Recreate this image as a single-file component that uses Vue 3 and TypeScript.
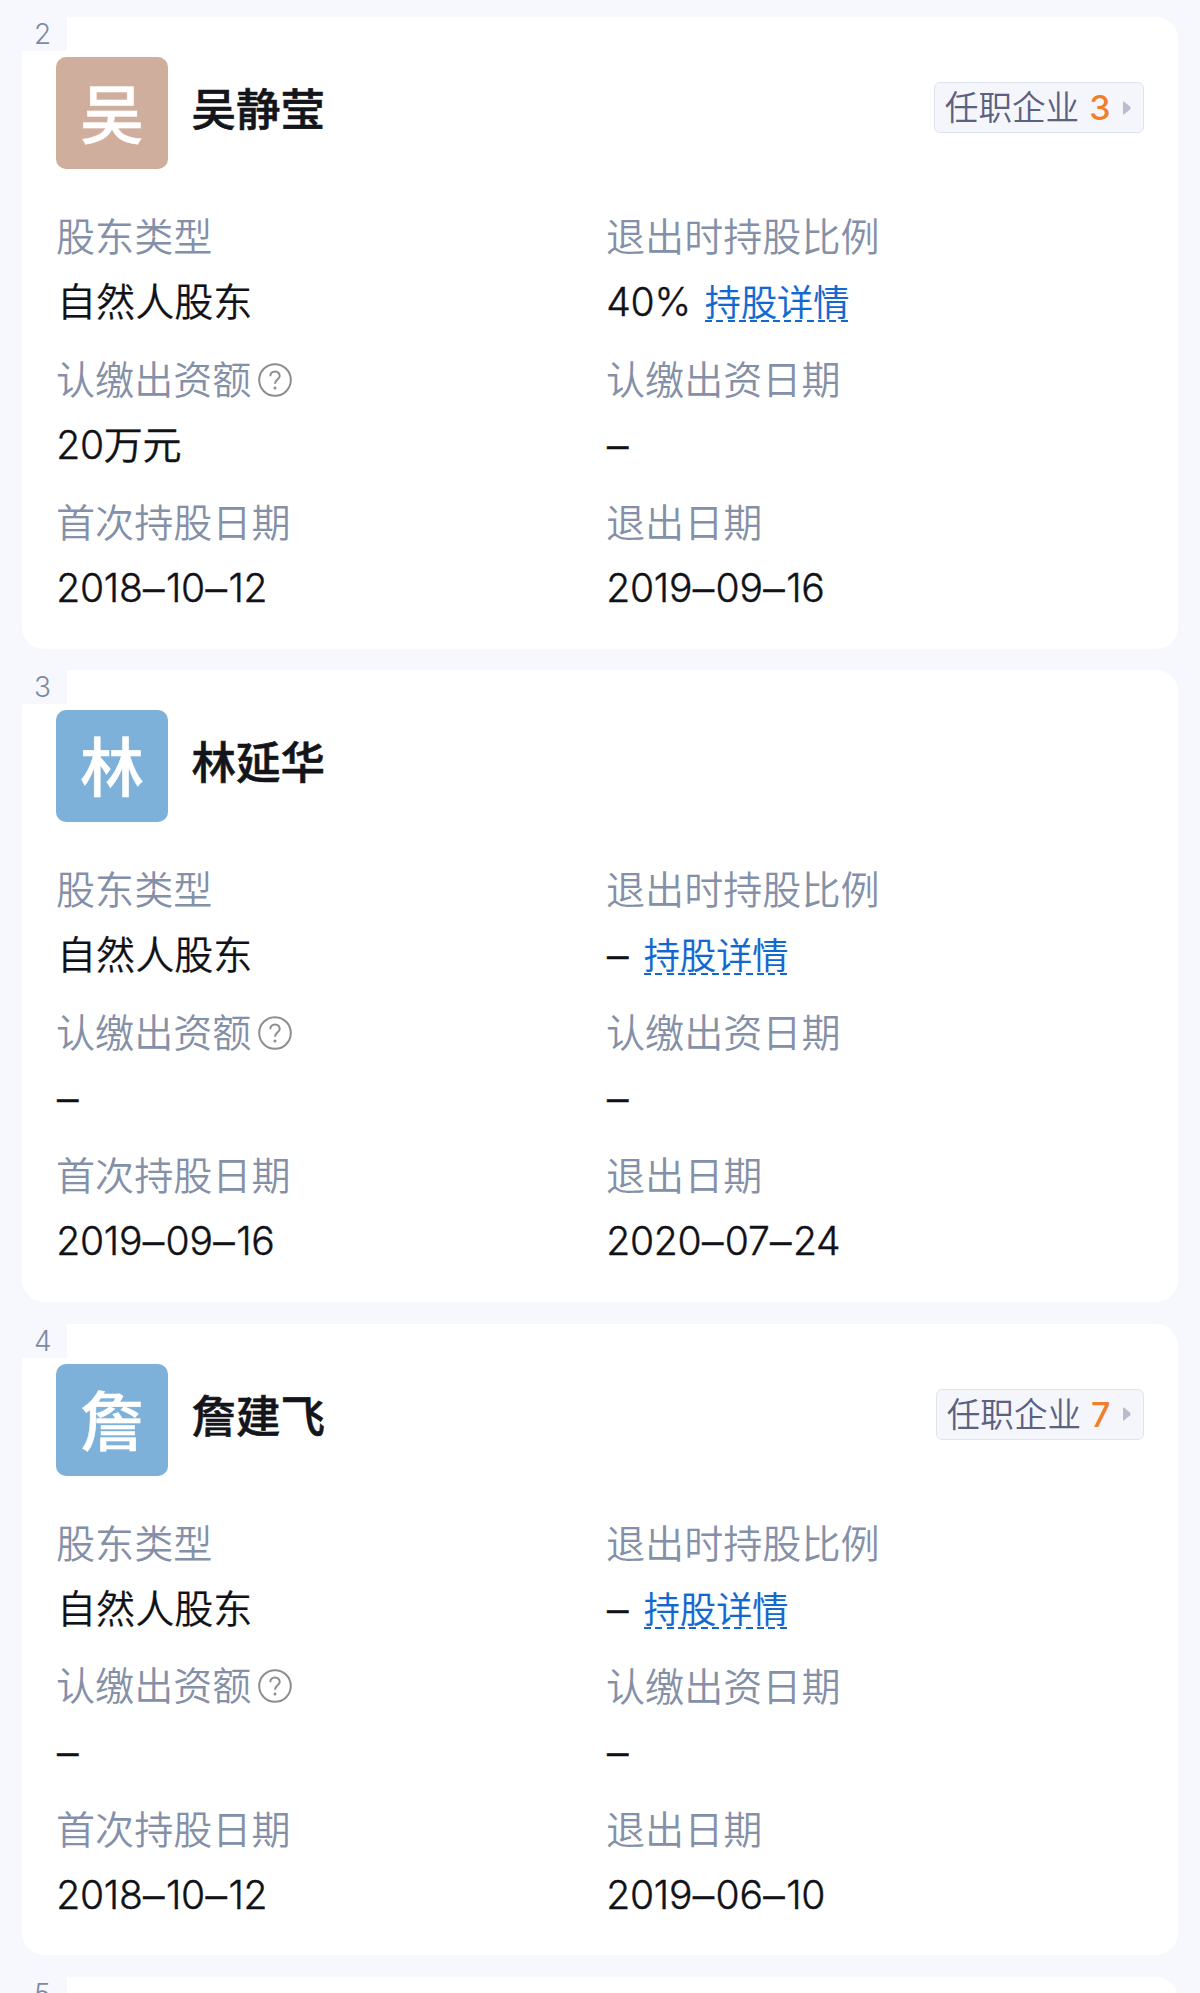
<script setup lang="ts">
interface Shareholder {
  index: number
  name: string
  tone: string
  jobs?: number
  ratio: string
  amount: string
  firstDate: string
  exitDate: string
}

const shareholders: Shareholder[] = [
  { index: 2, name: '吴静莹', tone: 'clay', jobs: 3, ratio: '40%', amount: '20万元', firstDate: '2018–10–12', exitDate: '2019–09–16' },
  { index: 3, name: '林延华', tone: 'sky', ratio: '–', amount: '–', firstDate: '2019–09–16', exitDate: '2020–07–24' },
  { index: 4, name: '詹建飞', tone: 'sky', jobs: 7, ratio: '–', amount: '–', firstDate: '2018–10–12', exitDate: '2019–06–10' },
]

// Dashes are set wider than the digits around them.
const pieces = (value: string): string[] => value.split(/(–)/).filter(Boolean)
</script>

<template>
  <main class="page">
    <article v-for="s in shareholders" :key="s.index" class="card">
      <span class="index">{{ s.index }}</span>
      <header class="head">
        <div class="avatar" :class="s.tone">{{ s.name.charAt(0) }}</div>
        <h2 class="name">{{ s.name }}</h2>
        <a v-if="s.jobs" class="badge">
          <span>任职企业</span>
          <b class="count">{{ s.jobs }}</b>
          <svg class="arrow" width="8" height="14" viewBox="0 0 8 14"><path d="M0 1.2Q0 0 1 .6L7.2 5.8Q8 7 7.2 8.2L1 13.4Q0 14 0 12.8Z" fill="#b9bccd" /></svg>
        </a>
      </header>
      <dl class="grid">
        <div class="field">
          <dt>股东类型</dt>
          <dd>自然人股东</dd>
        </div>
        <div class="field">
          <dt>退出时持股比例</dt>
          <dd class="num"><span :class="{ dash: s.ratio === '–' }">{{ s.ratio }}</span><a class="link">持股详情</a></dd>
        </div>
        <div class="field">
          <dt class="with-help">
            认缴出资额
            <svg class="help" width="34" height="34" viewBox="0 0 34 34" fill="none" stroke="#8d8d8f">
              <circle cx="17" cy="17" r="15.8" stroke-width="2" />
              <path d="M12.3 13.2C12.3 10.4 14.3 8.5 17 8.5S21.7 10.4 21.7 13C21.7 16.2 17 16.6 17 20.8" stroke-width="2" />
              <circle cx="17" cy="25" r="1.5" fill="#8d8d8f" stroke="none" />
            </svg>
          </dt>
          <dd class="num"><span v-for="(p, i) in pieces(s.amount)" :key="i" :class="{ dash: p === '–' }">{{ p }}</span></dd>
        </div>
        <div class="field">
          <dt>认缴出资日期</dt>
          <dd class="num"><span class="dash">–</span></dd>
        </div>
        <div class="field">
          <dt>首次持股日期</dt>
          <dd class="num"><span v-for="(p, i) in pieces(s.firstDate)" :key="i" :class="{ dash: p === '–' }">{{ p }}</span></dd>
        </div>
        <div class="field">
          <dt>退出日期</dt>
          <dd class="num"><span v-for="(p, i) in pieces(s.exitDate)" :key="i" :class="{ dash: p === '–' }">{{ p }}</span></dd>
        </div>
      </dl>
    </article>
    <article class="card">
      <span class="index">5</span>
    </article>
  </main>
</template>

<style>
body {
  margin: 0;
  background: #f6f8fd;
}
</style>

<style scoped>
.page {
  box-sizing: border-box;
  height: 1993px;
  overflow: hidden;
  padding: 17px 22px 0;
  display: flex;
  flex-direction: column;
  gap: 21.7px;
  background: #f6f8fd;
  font-family: Inter, "Noto Sans CJK SC", sans-serif;
}
.card {
  position: relative;
  flex: none;
  box-sizing: border-box;
  height: 631.7px;
  padding: 40px 34px 0;
  border-radius: 22px;
  background: #fff;
}
.index {
  position: absolute;
  left: 0;
  top: 0;
  width: 45px;
  height: 34px;
  box-sizing: border-box;
  padding-left: 12px;
  background: #f6f8fd;
  color: #7f8aa2;
  font-size: 28px;
  font-weight: 300;
  line-height: 34px;
}
.head {
  display: flex;
  height: 112px;
}
.avatar {
  flex: none;
  width: 112px;
  height: 112px;
  border-radius: 10px;
  color: #fff;
  font-size: 64px;
  font-weight: 500;
  line-height: 116px;
  text-align: center;
  -webkit-text-stroke: 0.5px currentColor;
}
.clay {
  background: #d0ae9e;
}
.sky {
  background: #7db1d9;
}
.name {
  margin: 0 0 0 23.5px;
  color: #14151a;
  font-size: 44.5px;
  font-weight: 500;
  line-height: 106px;
  -webkit-text-stroke: 0.6px currentColor;
}
.badge {
  box-sizing: border-box;
  display: flex;
  align-items: center;
  height: 51px;
  margin: 25px 0 0 auto;
  padding: 0 12px 0 10px;
  border: 1.5px solid #dfe3ee;
  border-radius: 6px;
  background: #f4f6fc;
  color: #5b6180;
  font-size: 33.6px;
  font-weight: 350;
  line-height: 47px;
}
.count {
  margin-left: 10px;
  color: #ef7f2c;
  font-size: 34px;
  font-weight: 500;
}
.arrow {
  margin-left: 12.5px;
}
.grid {
  display: grid;
  grid-template-columns: 550px 1fr;
  margin: 35px 0 0;
}
.field {
  height: 143px;
}
dt,
dd {
  margin: 0;
  height: 65px;
  font-size: 39.1px;
  line-height: 66px;
  white-space: nowrap;
}
dt {
  color: #8490a8;
  font-weight: 350;
}
dd {
  padding-left: 1px;
  color: #111217;
  font-weight: 350;
  -webkit-text-stroke: 0.2px currentColor;
}
.num {
  padding-left: 0.3px;
  letter-spacing: -0.3px;
  -webkit-text-stroke-width: 0.4px;
}
.dash {
  position: relative;
  top: 2px;
  margin-left: 0.6px;
  font-size: 43px;
  line-height: 0;
  letter-spacing: 1.4px;
}
.with-help {
  display: flex;
  align-items: center;
}
.help {
  margin-left: 7px;
}
.link {
  display: inline-block;
  height: 40px;
  margin-left: 14px;
  background: repeating-linear-gradient(90deg, #1268cf 0 7px, transparent 7px 11.3px) 0 100% / 100% 2px no-repeat;
  color: #1268cf;
  font-size: 36.2px;
  letter-spacing: 0;
  line-height: 43px;
  -webkit-text-stroke-width: 0.2px;
}
</style>
